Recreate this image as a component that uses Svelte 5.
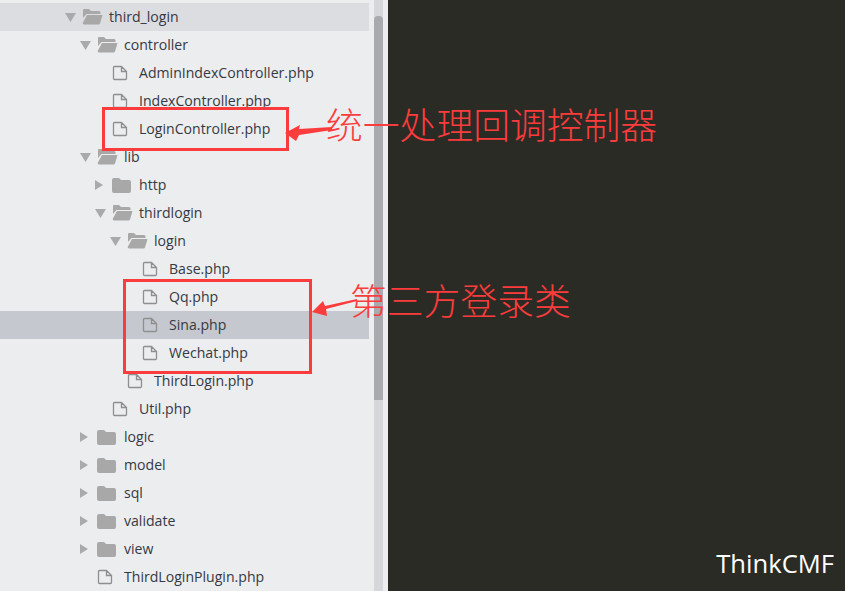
<script>
  // d = depth, t = type (open / closed folder or file)
  const rows = [
    { name: 'third_login', d: 0, t: 'open', active: true },
    { name: 'controller', d: 1, t: 'open' },
    { name: 'AdminIndexController.php', d: 2, t: 'file' },
    { name: 'IndexController.php', d: 2, t: 'file' },
    { name: 'LoginController.php', d: 2, t: 'file' },
    { name: 'lib', d: 1, t: 'open' },
    { name: 'http', d: 2, t: 'closed' },
    { name: 'thirdlogin', d: 2, t: 'open' },
    { name: 'login', d: 3, t: 'open' },
    { name: 'Base.php', d: 4, t: 'file' },
    { name: 'Qq.php', d: 4, t: 'file' },
    { name: 'Sina.php', d: 4, t: 'file', selected: true },
    { name: 'Wechat.php', d: 4, t: 'file' },
    { name: 'ThirdLogin.php', d: 3, t: 'file' },
    { name: 'Util.php', d: 2, t: 'file' },
    { name: 'logic', d: 1, t: 'closed' },
    { name: 'model', d: 1, t: 'closed' },
    { name: 'sql', d: 1, t: 'closed' },
    { name: 'validate', d: 1, t: 'closed' },
    { name: 'view', d: 1, t: 'closed' },
    { name: 'ThirdLoginPlugin.php', d: 1, t: 'file' }
  ];
</script>

<div class="screen">
  <aside class="sidebar">
    <ul class="tree">
      {#each rows as row}
        <li class="row" class:active={row.active} class:selected={row.selected} style="padding-left: {65 + row.d * 15}px">
          <span class="caret">
            {#if row.t === 'open'}
              <svg width="11" height="9" viewBox="0 0 11 9"><path d="M0 0h11L5.500 9z" fill="#a9aaac" /></svg>
            {:else if row.t === 'closed'}
              <svg width="8" height="10" viewBox="0 0 8 10"><path d="M0 0l8 5-8 5z" fill="#a9aaac" /></svg>
            {/if}
          </span>
          <span class="icon">
            {#if row.t === 'open'}
              <svg width="21" height="16" viewBox="0 0 21 16">
                <path d="M2 0h5l2 2h8a1.500 1.500 0 0 1 1.500 1.500V5H4.500L1 9V1a1 1 0 0 1 1-1z" fill="#a8a8a8" />
                <path d="M5 6h15.500L18 14.500a1.500 1.500 0 0 1-1.400 1H2a1.500 1.500 0 0 1-1.300-1.500z" fill="#a8a8a8" />
              </svg>
            {:else if row.t === 'closed'}
              <svg width="19" height="15" viewBox="0 0 19 15">
                <path d="M2 0h5l2 2h8a2 2 0 0 1 2 2v9a2 2 0 0 1-2 2H2a2 2 0 0 1-2-2V2a2 2 0 0 1 2-2z" fill="#a8a8a8" />
              </svg>
            {:else}
              <svg class="file" width="16" height="16" viewBox="0 0 16 16">
                <path d="M1.500 2.500a1 1 0 0 1 1-1h7l5 5v7a1 1 0 0 1-1 1h-11a1 1 0 0 1-1-1zM9.500 1.500v5h5" fill="none" stroke="#8e8f91" stroke-width="1.300" />
              </svg>
            {/if}
          </span>
          <span class="name">{row.name}</span>
        </li>
      {/each}
    </ul>
    <div class="scrollbar"><div class="thumb"></div></div>
  </aside>
  <main class="editor">
    <span class="mark">ThinkCMF</span>
  </main>

  <div class="box box-login"></div>
  <div class="box box-classes"></div>
  <svg class="arrows" width="845" height="591" viewBox="0 0 845 591">
    <path d="M285 133L300 125L299 129L332 127L332 130L299 135L296 141z" fill="#fb3c3c" />
    <path d="M312 312L323 301L325 306L357 299L357 301L326 309L327 316z" fill="#fb3c3c" />
  </svg>
  <span class="note note-login">统一处理回调控制器</span>
  <span class="note note-classes">第三方登录类</span>
</div>

<style>
:global(body) {
  margin: 0;
  background: #2b2b26;
}
.screen {
  position: relative;
  display: flex;
  width: 845px;
  height: 591px;
  overflow: hidden;
}
.sidebar {
  display: flex;
  width: 388px;
  flex: none;
  background: #ecedef;
}
.tree {
  list-style: none;
  margin: 0;
  padding: 3px 0 0 0;
  width: 369px;
  flex: none;
}
.row {
  display: flex;
  align-items: center;
  height: 28px;
  box-sizing: border-box;
}
.row.active { background: #dcdde0; }
.row.selected { background: #c6c8cf; }
.caret {
  width: 16px;
  flex: none;
  display: flex;
  align-items: center;
}
.icon {
  width: 28px;
  flex: none;
  display: flex;
  align-items: center;
  padding-left: 1px;
  box-sizing: border-box;
}
.name {
  font-family: "Open Sans", sans-serif;
  font-size: 14.100px;
  color: #353943;
  white-space: nowrap;
  padding-bottom: 2px;
}
.scrollbar {
  margin-left: 5px;
  width: 9px;
  flex: none;
  background: #d6d7da;
  padding-top: 16px;
  box-sizing: border-box;
}
.thumb {
  height: 384px;
  background: #a8aab0;
  border-radius: 4px 4px 0 0;
}
.editor {
  flex: 1;
  background: #2b2b26;
  display: flex;
  align-items: flex-end;
  justify-content: flex-end;
}
.mark {
  font-family: "Open Sans", sans-serif;
  font-size: 25.600px;
  color: #fff;
  margin: 0 11px 10px 0;
}
.box {
  position: absolute;
  border: 3px solid #fb3c3c;
  box-sizing: border-box;
}
.box-login { left: 102px; top: 107px; width: 187px; height: 44px; }
.box-classes { left: 123px; top: 279px; width: 189px; height: 95px; }
.arrows {
  position: absolute;
  left: 0;
  top: 0;
  pointer-events: none;
}
.note {
  position: absolute;
  font-family: "Noto Sans CJK SC", sans-serif;
  font-weight: 300;
  font-size: 36.800px;
  line-height: 44px;
  color: #fb3c3c;
  white-space: nowrap;
}
.note-login { left: 326px; top: 101px; }
.note-classes { left: 350px; top: 277px; }
</style>
